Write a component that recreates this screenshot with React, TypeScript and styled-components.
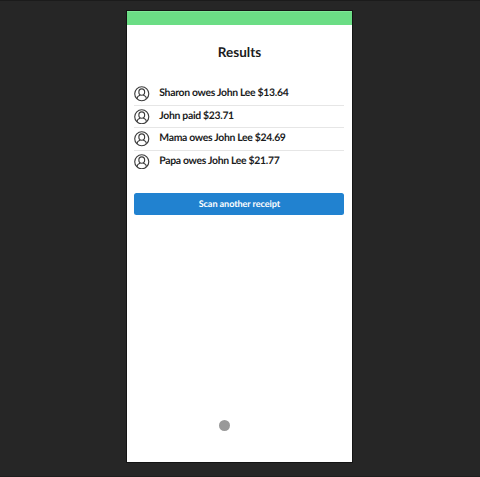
import React from "react";
import styled, { createGlobalStyle } from "styled-components";

const GlobalStyle = createGlobalStyle`
  *, *::before, *::after { box-sizing: border-box; }
  body { margin: 0; background: #262626; }
`;

const Desktop = styled.div`
  height: 477px;
  padding: 10px 0 0 127px;
  background: #262626;
  border-top: 1px solid #1b1b1b;
  border-bottom: 1px solid #1e1e1e;
  font-family: Lato, sans-serif;
  text-rendering: geometricPrecision;
  color: #1b1c1d;
  overflow: hidden;
`;

const Phone = styled.main`
  position: relative;
  width: 225px;
  height: 451px;
  background: #fff;
  box-shadow: 0 0 0 1px #141414;
`;

const StatusBar = styled.header`
  height: 14px;
  background: #6bdd85;
  border-top: 1px solid #7fe897;
`;

const Title = styled.h1`
  margin: 0;
  padding-top: 18px;
  height: 57px;
  font-size: 13.5px;
  line-height: 18px;
  font-weight: 700;
  text-align: center;
`;

const ResultList = styled.ul`
  list-style: none;
  margin: 0 8px 0 7px;
  padding: 0;
`;

const ResultRow = styled.li`
  display: flex;
  align-items: flex-start;
  height: 22.5px;
  padding-top: 3px;
  font-size: 10.4px;
  line-height: 16px;
  font-weight: 700;
  letter-spacing: -0.3px;
  white-space: nowrap;

  & + & { border-top: 1px solid #e6e6e6; padding-top: 2px; }
`;

const Avatar = styled.svg`
  flex: none;
  width: 15.5px;
  height: 15.5px;
  margin: 1px 9.8px 0 0;
  fill: none;
  stroke: #3c3c3c;
  stroke-width: 1.1;
`;

const ScanButton = styled.button`
  display: block;
  width: 210px;
  height: 22px;
  margin: 21px 0 0 7.4px;
  padding: 0;
  border: 0;
  border-radius: 2.5px;
  background: #2182d0;
  color: #fff;
  font: 700 9.1px/22px Lato, sans-serif;
  letter-spacing: -0.08px;
  text-rendering: geometricPrecision;
`;

const TouchPoint = styled.div`
  position: absolute;
  left: 92px;
  top: 409px;
  width: 11px;
  height: 11px;
  border-radius: 50%;
  background: #999;
`;

const results = [
  "Sharon owes John Lee $13.64",
  "John paid $23.71",
  "Mama owes John Lee $24.69",
  "Papa owes John Lee $21.77",
];

function PersonIcon() {
  return (
    <Avatar viewBox="0 0 15 15" aria-hidden="true">
      <circle cx="7.5" cy="7.5" r="6.8" />
      <ellipse cx="7.5" cy="5.9" rx="2.8" ry="3.1" />
      <path d="M3.2 12.4V11.4C3.2 10 4.7 9.6 6 8.9M9 8.9C10.3 9.6 11.8 10 11.8 11.4V12.4" />
    </Avatar>
  );
}

export default function App() {
  return (
    <>
      <GlobalStyle />
      <Desktop>
        <Phone>
          <StatusBar />
          <Title>Results</Title>
          <ResultList>
            {results.map((result) => (
              <ResultRow key={result}>
                <PersonIcon />
                <span>{result}</span>
              </ResultRow>
            ))}
          </ResultList>
          <ScanButton type="button">Scan another receipt</ScanButton>
          <TouchPoint />
        </Phone>
      </Desktop>
    </>
  );
}
